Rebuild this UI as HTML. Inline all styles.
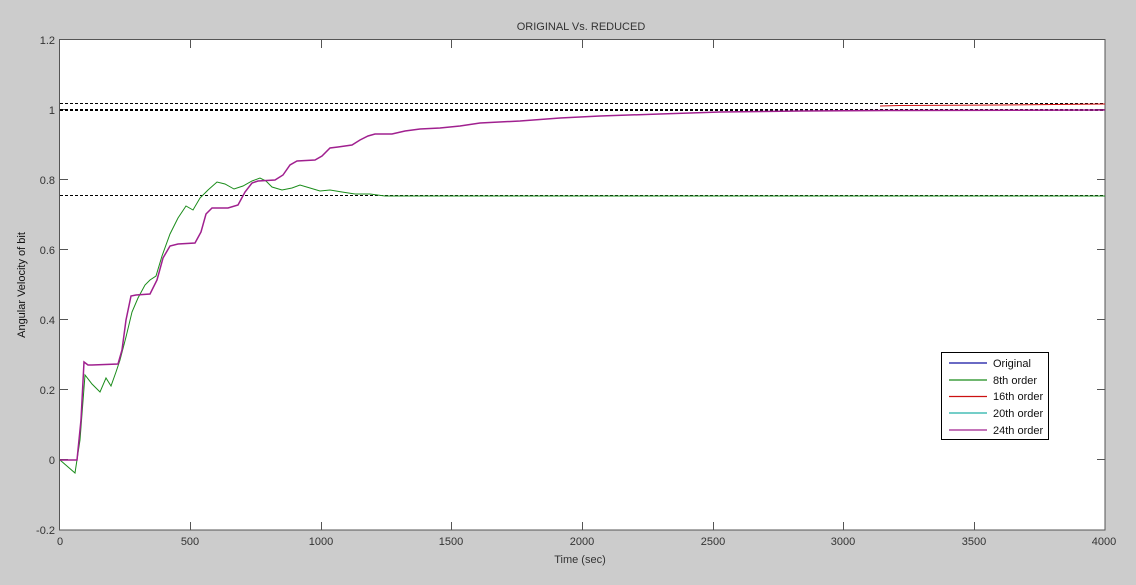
<!DOCTYPE html>
<html><head><style>
html,body{margin:0;padding:0;background:#cccccc;}
svg{display:block;font-family:"Liberation Sans",Arial,sans-serif;}
</style></head><body>
<svg width="1136" height="585" viewBox="0 0 1136 585" xmlns="http://www.w3.org/2000/svg">
<rect width="1136" height="585" fill="#cccccc"/>
<rect x="59.5" y="39.5" width="1045.5" height="490.5" fill="#fff" stroke="#555" stroke-width="1"/>
<g stroke="#555" stroke-width="1">
<path d="M190.5 40v8M321.5 40v8M451.5 40v8M582.5 40v8M713.5 40v8M843.5 40v8M974.5 40v8
M190.5 530v-8M321.5 530v-8M451.5 530v-8M582.5 530v-8M713.5 530v-8M843.5 530v-8M974.5 530v-8
M60 109.5h8M60 179.5h8M60 249.5h8M60 319.5h8M60 389.5h8M60 459.5h8
M1105 109.5h-8M1105 179.5h-8M1105 249.5h-8M1105 319.5h-8M1105 389.5h-8M1105 459.5h-8"/>
</g>
<g font-size="11" fill="#333" text-anchor="end">
<text x="55" y="44">1.2</text><text x="55" y="114">1</text><text x="55" y="184">0.8</text>
<text x="55" y="254">0.6</text><text x="55" y="324">0.4</text><text x="55" y="394">0.2</text>
<text x="55" y="464">0</text><text x="55" y="534">-0.2</text>
</g>
<g font-size="11" fill="#333" text-anchor="middle">
<text x="60" y="545">0</text><text x="190" y="545">500</text><text x="321" y="545">1000</text>
<text x="451" y="545">1500</text><text x="582" y="545">2000</text><text x="713" y="545">2500</text>
<text x="843" y="545">3000</text><text x="974" y="545">3500</text><text x="1104" y="545">4000</text>
<text x="580" y="563">Time (sec)</text>
<text x="581" y="30">ORIGINAL Vs. REDUCED</text>
</g>
<text x="25" y="285" font-size="11" fill="#111" text-anchor="middle" transform="rotate(-90 25 285)">Angular Velocity of bit</text>
<g fill="none">
<path d="M60 103.5H1105" stroke="#000" stroke-dasharray="3,2"/>
<path d="M60 110H1105" stroke="#000" stroke-width="2" stroke-dasharray="3,2"/>
<path d="M60 195.5H1105" stroke="#000" stroke-dasharray="3,2"/>
<path d="M60 460 L75 473 L80 440 L85 375 L92 384 L100 392 L106 378 L111 386 L116 372 L120 360 L126 337 L132 312 L138 298 L145 285 L150 280 L156 276 L162 256 L170 234 L178 218 L186 206 L193 210 L200 198 L208 190 L217 182 L225 184 L234 189 L243 186 L252 181 L260 178 L266 181 L272 187 L282 190 L292 188 L300 185 L310 188 L320 191 L330 190 L342 192 L355 194 L370 194 L385 196 L400 196 L1105 196" stroke="#1a8c1a"/>
<path d="M880 106 L900 105.5 L1000 105 L1105 104" stroke="#cc1111"/>
<path d="M60 460 L77 460 L81 420 L84 362 L88 365 L92 365 L118 364 L122 350 L126 320 L131 296 L136 295 L150 294 L157 280 L163 258 L170 246 L178 244 L195 243 L201 232 L206 214 L212 208 L228 208 L238 205 L245 192 L252 183 L258 181 L275 180 L283 175 L290 165 L297 161 L315 160 L322 156 L330 148 L338 147 L352 145 L360 140 L368 136 L375 134 L392 134 L405 131 L420 129 L440 128 L460 126 L480 123 L520 121 L560 118 L600 116 L660 114 L720 112 L800 111 L900 110.5 L1105 110" stroke="#a0208f" stroke-width="1.5"/>
</g>
<rect x="941.5" y="352.5" width="107" height="87" fill="#fff" stroke="#000"/>
<g stroke-width="1.2">
<path d="M949 363h38" stroke="#1010a0"/>
<path d="M949 380h38" stroke="#1a8c1a"/>
<path d="M949 396.5h38" stroke="#cc1111"/>
<path d="M949 413h38" stroke="#20b0a8"/>
<path d="M949 430h38" stroke="#a0208f"/>
</g>
<g font-size="11" fill="#111">
<text x="993" y="367">Original</text>
<text x="993" y="384">8th order</text>
<text x="993" y="400">16th order</text>
<text x="993" y="417">20th order</text>
<text x="993" y="434">24th order</text>
</g>
</svg>
</body></html>
